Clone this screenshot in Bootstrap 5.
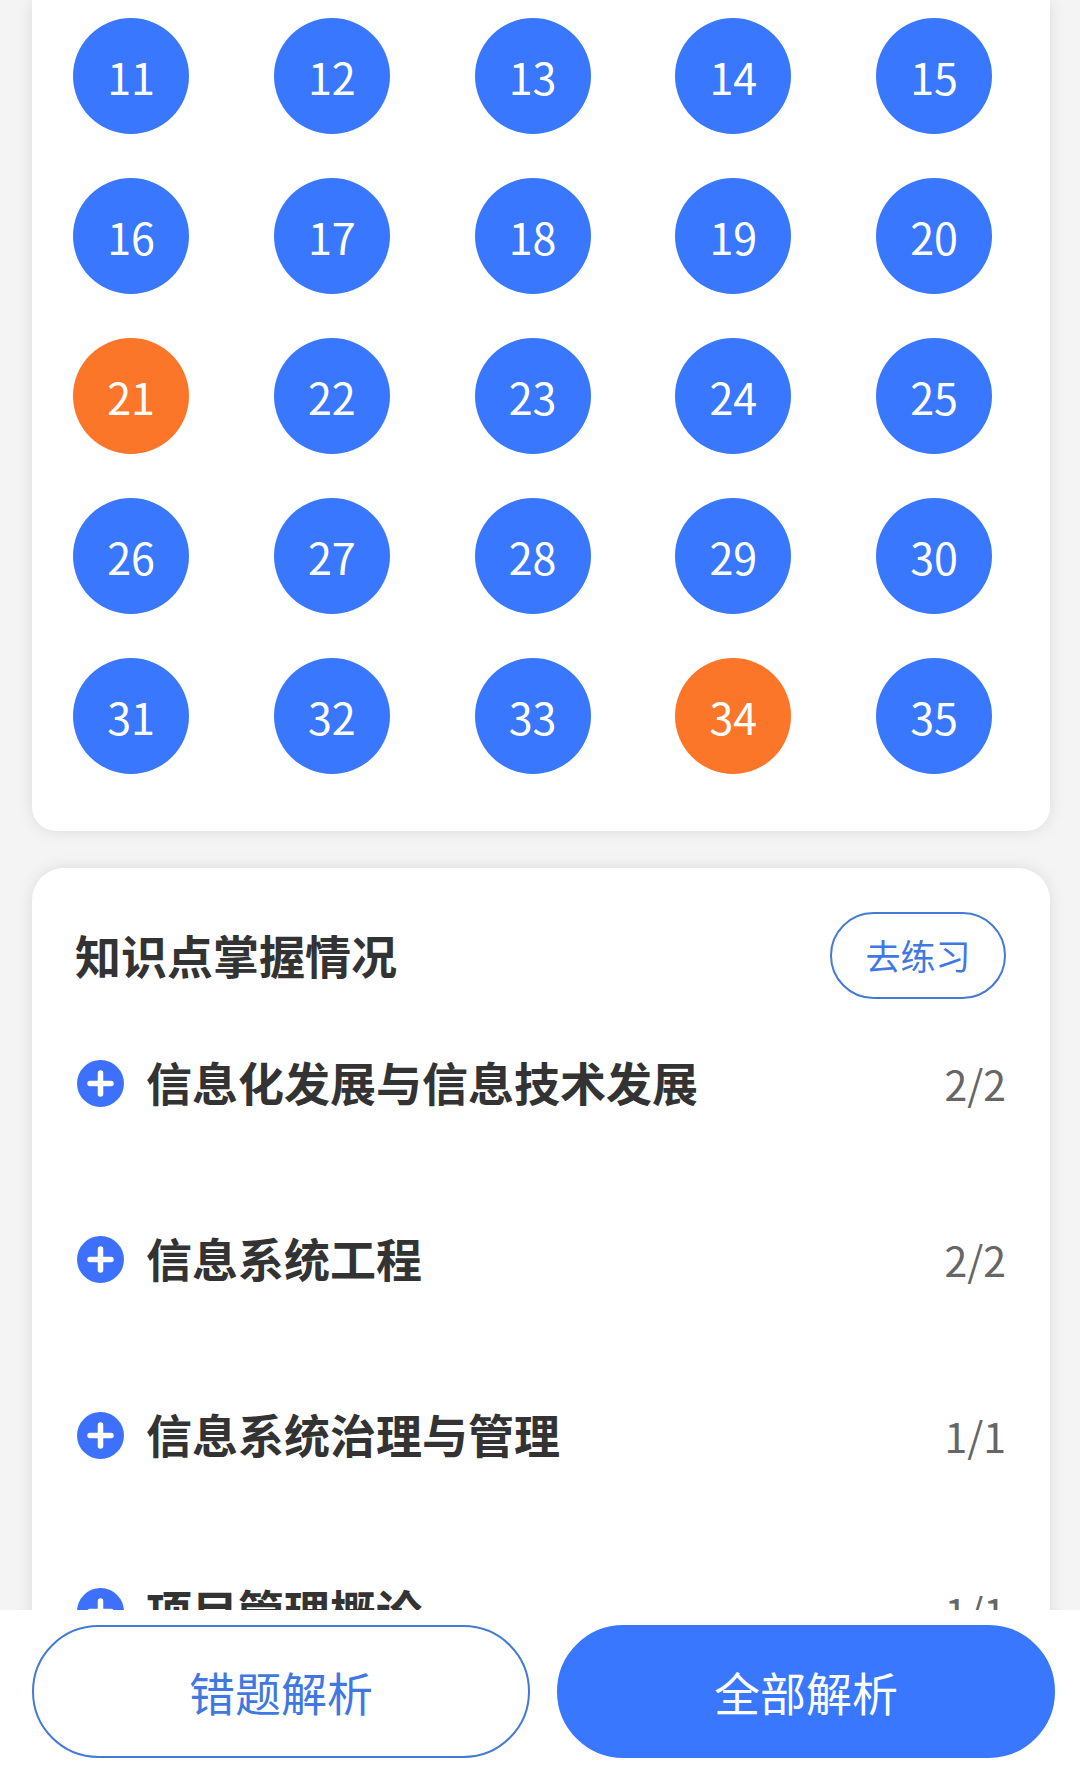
<!DOCTYPE html>
<html lang="zh-CN">
<head>
<meta charset="utf-8">
<meta name="viewport" content="width=device-width, initial-scale=1">
<title>答题报告</title>
<link href="https://cdn.jsdelivr.net/npm/bootstrap@5.3.0/dist/css/bootstrap.min.css" rel="stylesheet">
<style>
body { font-family: "Noto Sans CJK SC", sans-serif; background: #f4f4f4; color: #333; }
.report-scroll { min-height: 0; overflow-y: auto; scrollbar-width: none; padding: 0 30px 0 32px; }
.report-scroll::-webkit-scrollbar { display: none; }
.panel { background: #fff; box-shadow: 0 0 16px rgba(0, 0, 0, .1); }
.answer-panel { border-radius: 0 0 24px 24px; padding: 18px 58px 57px 41px; margin-bottom: 37px; }
.answer-rows { gap: 44px; }
.num { width: 116px; height: 116px; padding: 0; border: 0; border-radius: 50%; background: #3877fe; color: #fff; font-size: 43px; line-height: 64px; }
.num.wrong { background: #fc762a; }
.topic-panel { border-radius: 32px; padding: 44px 44px 60px 43px; }
.panel-title { font-size: 46px; line-height: 68px; font-weight: 700; padding-bottom: 4px; }
.pill { border: 2px solid #4479d4; border-radius: 67px; background: #fff; color: #3f78e2; padding: 0 0 2px; }
.practice { width: 176px; height: 87px; font-size: 35px; line-height: 52px; }
.topics { margin-top: 48px; gap: 104px; padding-left: 2px; }
.topic { gap: 22px; padding: 0; border: 0; background: none; color: inherit; font-size: 46px; line-height: 68px; font-weight: 700; }
.topic span { padding-bottom: 4px; }
.topic svg { width: 47px; height: 47px; }
.score { font-size: 41px; line-height: 68px; color: #666; }
.action-bar { background: #fff; gap: 27px; padding: 15px 25px 12px 32px; }
.action-bar .pill { height: 133px; font-size: 46px; line-height: 68px; flex: 1 1 0; }
.action-bar .solid { background: #3877fe; border-color: #3877fe; color: #fff; }
</style>
</head>
<body>
<div class="vh-100 d-flex flex-column">
  <main class="report-scroll flex-fill">
    <section class="panel answer-panel" aria-label="答题卡">
      <div class="answer-rows d-flex flex-column">
        <div class="d-flex justify-content-between">
          <button type="button" class="num">11</button><button type="button" class="num">12</button><button type="button" class="num">13</button><button type="button" class="num">14</button><button type="button" class="num">15</button>
        </div>
        <div class="d-flex justify-content-between">
          <button type="button" class="num">16</button><button type="button" class="num">17</button><button type="button" class="num">18</button><button type="button" class="num">19</button><button type="button" class="num">20</button>
        </div>
        <div class="d-flex justify-content-between">
          <button type="button" class="num wrong">21</button><button type="button" class="num">22</button><button type="button" class="num">23</button><button type="button" class="num">24</button><button type="button" class="num">25</button>
        </div>
        <div class="d-flex justify-content-between">
          <button type="button" class="num">26</button><button type="button" class="num">27</button><button type="button" class="num">28</button><button type="button" class="num">29</button><button type="button" class="num">30</button>
        </div>
        <div class="d-flex justify-content-between">
          <button type="button" class="num">31</button><button type="button" class="num">32</button><button type="button" class="num">33</button><button type="button" class="num wrong">34</button><button type="button" class="num">35</button>
        </div>
      </div>
    </section>

    <section class="panel topic-panel">
      <div class="d-flex justify-content-between align-items-center">
        <h2 class="panel-title mb-0">知识点掌握情况</h2>
        <button type="button" class="pill practice">去练习</button>
      </div>
      <ul class="topics list-unstyled mb-0 d-flex flex-column">
        <li class="d-flex justify-content-between align-items-center">
          <button type="button" class="topic d-flex align-items-center"><svg viewBox="0 0 47 47" aria-hidden="true"><circle cx="23.5" cy="23.5" r="23.5" fill="#3d71fb"/><path d="M23.5 13v21M13 23.5h21" stroke="#fff" stroke-width="5.5" stroke-linecap="round"/></svg><span>信息化发展与信息技术发展</span></button>
          <span class="score">2/2</span>
        </li>
        <li class="d-flex justify-content-between align-items-center">
          <button type="button" class="topic d-flex align-items-center"><svg viewBox="0 0 47 47" aria-hidden="true"><circle cx="23.5" cy="23.5" r="23.5" fill="#3d71fb"/><path d="M23.5 13v21M13 23.5h21" stroke="#fff" stroke-width="5.5" stroke-linecap="round"/></svg><span>信息系统工程</span></button>
          <span class="score">2/2</span>
        </li>
        <li class="d-flex justify-content-between align-items-center">
          <button type="button" class="topic d-flex align-items-center"><svg viewBox="0 0 47 47" aria-hidden="true"><circle cx="23.5" cy="23.5" r="23.5" fill="#3d71fb"/><path d="M23.5 13v21M13 23.5h21" stroke="#fff" stroke-width="5.5" stroke-linecap="round"/></svg><span>信息系统治理与管理</span></button>
          <span class="score">1/1</span>
        </li>
        <li class="d-flex justify-content-between align-items-center">
          <button type="button" class="topic d-flex align-items-center"><svg viewBox="0 0 47 47" aria-hidden="true"><circle cx="23.5" cy="23.5" r="23.5" fill="#3d71fb"/><path d="M23.5 13v21M13 23.5h21" stroke="#fff" stroke-width="5.5" stroke-linecap="round"/></svg><span>项目管理概论</span></button>
          <span class="score">1/1</span>
        </li>
      </ul>
    </section>
  </main>

  <footer class="action-bar d-flex">
    <button type="button" class="pill">错题解析</button>
    <button type="button" class="pill solid">全部解析</button>
  </footer>
</div>
<script src="https://cdn.jsdelivr.net/npm/bootstrap@5.3.0/dist/js/bootstrap.bundle.min.js"></script>
</body>
</html>
